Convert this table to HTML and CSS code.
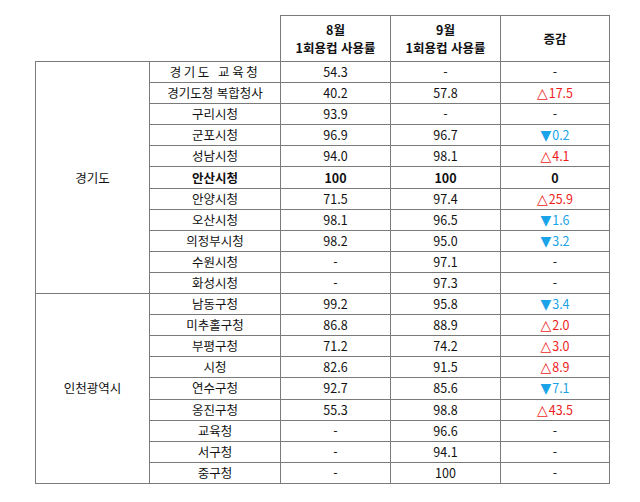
FILE: index.html
```html
<!DOCTYPE html>
<html lang="ko">
<head>
<meta charset="utf-8">
<link rel="stylesheet" href="styles.css">
</head>
<body>
<table class="usage">
  <colgroup>
    <col class="c-region"><col class="c-org"><col class="c-num"><col class="c-num"><col class="c-diff">
  </colgroup>
  <thead>
    <tr class="head">
      <th class="blank"></th>
      <th class="blank"></th>
      <th>8월<br>1회용컵 사용률</th>
      <th>9월<br>1회용컵 사용률</th>
      <th>증감</th>
    </tr>
  </thead>
  <tbody>
    <tr><td class="region" rowspan="11">경기도</td><td class="wide">경기도 교육청</td><td>54.3</td><td>-</td><td>-</td></tr>
    <tr><td>경기도청 복합청사</td><td>40.2</td><td>57.8</td><td class="up"><span class="tri">△</span>17.5</td></tr>
    <tr><td>구리시청</td><td>93.9</td><td>-</td><td>-</td></tr>
    <tr><td>군포시청</td><td>96.9</td><td>96.7</td><td class="down"><span class="tri">▼</span>0.2</td></tr>
    <tr><td>성남시청</td><td>94.0</td><td>98.1</td><td class="up"><span class="tri">△</span>4.1</td></tr>
    <tr class="bold"><td>안산시청</td><td>100</td><td>100</td><td>0</td></tr>
    <tr><td>안양시청</td><td>71.5</td><td>97.4</td><td class="up"><span class="tri">△</span>25.9</td></tr>
    <tr><td>오산시청</td><td>98.1</td><td>96.5</td><td class="down"><span class="tri">▼</span>1.6</td></tr>
    <tr><td>의정부시청</td><td>98.2</td><td>95.0</td><td class="down"><span class="tri">▼</span>3.2</td></tr>
    <tr><td>수원시청</td><td>-</td><td>97.1</td><td>-</td></tr>
    <tr><td>화성시청</td><td>-</td><td>97.3</td><td>-</td></tr>
    <tr><td class="region" rowspan="9">인천광역시</td><td>남동구청</td><td>99.2</td><td>95.8</td><td class="down"><span class="tri">▼</span>3.4</td></tr>
    <tr><td>미추홀구청</td><td>86.8</td><td>88.9</td><td class="up"><span class="tri">△</span>2.0</td></tr>
    <tr><td>부평구청</td><td>71.2</td><td>74.2</td><td class="up"><span class="tri">△</span>3.0</td></tr>
    <tr><td>시청</td><td>82.6</td><td>91.5</td><td class="up"><span class="tri">△</span>8.9</td></tr>
    <tr><td>연수구청</td><td>92.7</td><td>85.6</td><td class="down"><span class="tri">▼</span>7.1</td></tr>
    <tr><td>옹진구청</td><td>55.3</td><td>98.8</td><td class="up"><span class="tri">△</span>43.5</td></tr>
    <tr><td>교육청</td><td>-</td><td>96.6</td><td>-</td></tr>
    <tr><td>서구청</td><td>-</td><td>94.1</td><td>-</td></tr>
    <tr><td>중구청</td><td>-</td><td>100</td><td>-</td></tr>
  </tbody>
</table>
</body>
</html>
```
FILE: styles.css
```css
html, body {
  margin: 0;
  padding: 0;
  background: #ffffff;
}
body {
  padding: 15px 0 0 35px;
  font-family: "Noto Sans CJK KR", "Noto Sans", sans-serif;
  font-size: 12.5px;
  color: #111;
}
.usage {
  border-collapse: collapse;
  table-layout: fixed;
  width: 574px;
}
.c-region { width: 114px; }
.c-org { width: 131px; }
.c-num { width: 110px; }
.c-diff { width: 109px; }
.usage th,
.usage td {
  border: 1px solid #7a7a7a;
  padding: 0;
  text-align: center;
  vertical-align: middle;
  line-height: 16px;
  white-space: nowrap;
}
.usage .head th {
  height: 45px;
  font-weight: 700;
  line-height: 18px;
}
.usage th.blank {
  border: none;
}
.usage tbody tr {
  height: 21.1px;
}
.usage td.wide {
  letter-spacing: 2.6px;
}
.usage tr.bold td {
  font-weight: 700;
}
.usage td.up {
  color: #ee1c1c;
}
.usage td.down {
  color: #1aa3e8;
}
.tri {
  font-family: "DejaVu Sans", sans-serif;
  font-size: 14px;
  line-height: 1;
  margin-right: 1px;
}
```
